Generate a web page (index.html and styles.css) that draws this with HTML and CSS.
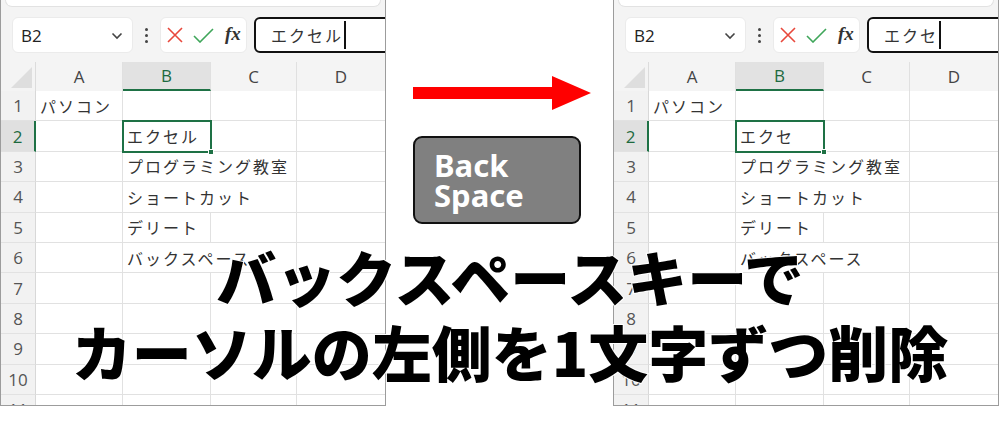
FILE: index.html
```html
<!DOCTYPE html>
<html lang="ja">
<head>
<meta charset="utf-8">
<title>BackSpace</title>
<link rel="stylesheet" href="styles.css">
</head>
<body>
<div class="page">
  <div class="sheet">
    <div class="ribbon"></div>
    <div class="fbar">
      <div class="namebox"><span class="ref">B2</span>
        <svg class="chev" width="12" height="8" viewBox="0 0 12 8"><path d="M1.5 1.5 L6 6 L10.5 1.5" fill="none" stroke="#444" stroke-width="1.6"/></svg>
      </div>
      <div class="dots"><i></i><i></i><i></i></div>
      <div class="fxbox">
        <svg width="16" height="16" viewBox="0 0 16 16"><path d="M1 1 L15 15 M15 1 L1 15" stroke="#e8483c" stroke-width="1.6"/></svg>
        <svg width="21" height="15" viewBox="0 0 21 15"><path d="M1 8 L7 14 L20 1" fill="none" stroke="#3fa65a" stroke-width="1.6"/></svg>
        <span class="fx">fx</span>
      </div>
      <div class="finput"><span class="ftext">エクセル</span><span class="caret"></span></div>
    </div>
    <div class="grid">
      <div class="corner"><span class="tri"></span></div>
      <div class="ch">A</div><div class="ch selc">B</div><div class="ch">C</div><div class="ch last">D</div>

      <div class="rh">1</div><div class="c">パソコン</div><div class="c"></div><div class="c"></div><div class="c last"></div>
      <div class="rh selr">2</div><div class="c"></div><div class="c sel">エクセル<span class="handle"></span></div><div class="c"></div><div class="c last"></div>
      <div class="rh">3</div><div class="c"></div><div class="c span">プログラミング教室</div><div class="c last"></div>
      <div class="rh">4</div><div class="c"></div><div class="c span">ショートカット</div><div class="c last"></div>
      <div class="rh">5</div><div class="c"></div><div class="c">デリート</div><div class="c"></div><div class="c last"></div>
      <div class="rh">6</div><div class="c"></div><div class="c span">バックスペース</div><div class="c last"></div>
      <div class="rh">7</div><div class="c"></div><div class="c"></div><div class="c"></div><div class="c last"></div>
      <div class="rh">8</div><div class="c"></div><div class="c"></div><div class="c"></div><div class="c last"></div>
      <div class="rh">9</div><div class="c"></div><div class="c"></div><div class="c"></div><div class="c last"></div>
      <div class="rh">10</div><div class="c"></div><div class="c"></div><div class="c"></div><div class="c last"></div>
      <div class="rh">11</div><div class="c"></div><div class="c"></div><div class="c"></div><div class="c last"></div>
    </div>
  </div>

  <div class="middle">
    <svg class="arrow" width="178" height="34" viewBox="0 0 178 34"><path d="M0 11 H139 V0 L178 17 L139 34 V23 H0 Z" fill="#ff0000"/></svg>
    <div class="key"><span>Back</span><span>Space</span></div>
  </div>

  <div class="sheet">
    <div class="ribbon"></div>
    <div class="fbar">
      <div class="namebox"><span class="ref">B2</span>
        <svg class="chev" width="12" height="8" viewBox="0 0 12 8"><path d="M1.5 1.5 L6 6 L10.5 1.5" fill="none" stroke="#444" stroke-width="1.6"/></svg>
      </div>
      <div class="dots"><i></i><i></i><i></i></div>
      <div class="fxbox">
        <svg width="16" height="16" viewBox="0 0 16 16"><path d="M1 1 L15 15 M15 1 L1 15" stroke="#e8483c" stroke-width="1.6"/></svg>
        <svg width="21" height="15" viewBox="0 0 21 15"><path d="M1 8 L7 14 L20 1" fill="none" stroke="#3fa65a" stroke-width="1.6"/></svg>
        <span class="fx">fx</span>
      </div>
      <div class="finput"><span class="ftext">エクセ</span><span class="caret"></span></div>
    </div>
    <div class="grid">
      <div class="corner"><span class="tri"></span></div>
      <div class="ch">A</div><div class="ch selc">B</div><div class="ch">C</div><div class="ch last">D</div>

      <div class="rh">1</div><div class="c">パソコン</div><div class="c"></div><div class="c"></div><div class="c last"></div>
      <div class="rh selr">2</div><div class="c"></div><div class="c sel">エクセ<span class="handle"></span></div><div class="c"></div><div class="c last"></div>
      <div class="rh">3</div><div class="c"></div><div class="c span">プログラミング教室</div><div class="c last"></div>
      <div class="rh">4</div><div class="c"></div><div class="c span">ショートカット</div><div class="c last"></div>
      <div class="rh">5</div><div class="c"></div><div class="c">デリート</div><div class="c"></div><div class="c last"></div>
      <div class="rh">6</div><div class="c"></div><div class="c span">バックスペース</div><div class="c last"></div>
      <div class="rh">7</div><div class="c"></div><div class="c"></div><div class="c"></div><div class="c last"></div>
      <div class="rh">8</div><div class="c"></div><div class="c"></div><div class="c"></div><div class="c last"></div>
      <div class="rh">9</div><div class="c"></div><div class="c"></div><div class="c"></div><div class="c last"></div>
      <div class="rh">10</div><div class="c"></div><div class="c"></div><div class="c"></div><div class="c last"></div>
      <div class="rh">11</div><div class="c"></div><div class="c"></div><div class="c"></div><div class="c last"></div>
    </div>
  </div>

  <div class="caption">
    <div>バックスペースキーで</div>
    <div>カーソルの左側を1文字ずつ削除</div>
  </div>
</div>
</body>
</html>
```

FILE: styles.css
```css
* { box-sizing: border-box; }
html, body { margin: 0; padding: 0; background: #fff; }
body { font-family: "Noto Sans", "Noto Sans CJK JP", sans-serif; }

.page {
  position: relative;
  width: 1000px;
  height: 438px;
  display: flex;
  align-items: flex-start;
  overflow: hidden;
}

.sheet {
  width: 386px;
  height: 406px;
  background: #f4f4f4;
  border: 1px solid #9c9c9c;
  border-top: none;
  overflow: hidden;
  flex: none;
}

.ribbon {
  height: 7px;
  margin: 0 4px;
  background: #fff;
  border: 1px solid #e2e2e2;
  border-top: none;
  border-radius: 0 0 7px 7px;
}

.fbar {
  display: flex;
  align-items: stretch;
  height: 36px;
  margin: 10px 0 0 11px;
}

.namebox {
  width: 121px;
  background: #fff;
  border-radius: 6px;
  border: 1px solid #ebebeb;
  display: flex;
  align-items: center;
  justify-content: space-between;
  padding: 0 9px 0 8px;
}
.ref { font-family: "Open Sans", sans-serif; font-size: 17px; color: #222; }
.chev { margin-top: 1px; }

.dots {
  width: 27px;
  display: flex;
  flex-direction: column;
  align-items: center;
  justify-content: center;
  gap: 3px;
}
.dots i { display: block; width: 3px; height: 3px; border-radius: 50%; background: #444; }

.fxbox {
  width: 87px;
  background: #fff;
  border-radius: 6px;
  border: 1px solid #ebebeb;
  display: flex;
  align-items: center;
  padding-left: 6px;
  gap: 10px;
}
.fx {
  font-family: "Liberation Serif", "DejaVu Serif", serif;
  font-style: italic;
  font-weight: bold;
  font-size: 19px;
  color: #333;
  margin-left: 1px;
  margin-top: -2px;
}

.finput {
  flex: 1;
  margin-left: 7px;
  margin-right: -12px;
  background: #fff;
  border: 2px solid #111;
  border-radius: 6px;
  display: flex;
  align-items: center;
  padding-left: 15px;
}
.ftext {
  font-family: "Noto Sans CJK JP", sans-serif;
  font-size: 16px;
  letter-spacing: 2px;
  color: #333;
}
.caret { width: 1.5px; height: 28px; background: #111; margin-left: 1px; }

.grid {
  margin-top: 9px;
  display: grid;
  grid-template-columns: 35px 87px 88px 86px 1fr;
  grid-template-rows: 29px;
  grid-auto-rows: 30.4px;
  background: #fff;
}

.corner {
  background: #f4f4f4;
  border-right: 1px solid #dcdcdc;
  position: relative;
}
.tri {
  position: absolute;
  right: 3px;
  bottom: 3px;
  width: 0; height: 0;
  border-left: 21px solid transparent;
  border-bottom: 21px solid #dedede;
}

.ch {
  background: #f4f4f4;
  border-right: 1px solid #e0e0e0;
  display: flex;
  align-items: center;
  justify-content: center;
  font-family: "Open Sans", sans-serif;
  font-size: 17px;
  color: #444;
}
.ch.last { border-right: none; }
.ch.selc {
  background: #e2e2e2;
  color: #1d6a3f;
  border-bottom: 2px solid #1e7145;
}

.rh {
  background: #f2f2f2;
  border-right: 1px solid #d8d8d8;
  border-bottom: 1px solid #e2e2e2;
  display: flex;
  align-items: center;
  justify-content: center;
  font-family: "Open Sans", sans-serif;
  font-size: 17px;
  color: #555;
}
.rh.selr {
  background: #e0e0e0;
  color: #1d6a3f;
  border-right: 2px solid #1e7145;
}

.c {
  border-right: 1px solid #e1e1e1;
  border-bottom: 1px solid #e1e1e1;
  font-family: "Noto Sans CJK JP", sans-serif;
  font-size: 16px;
  letter-spacing: 2px;
  color: #333;
  white-space: nowrap;
  display: flex;
  align-items: center;
  padding-left: 4px;
}
.c.last { border-right: none; }
.c.span { grid-column: span 2; }

.c.sel {
  position: relative;
  outline: 2px solid #1e7145;
  outline-offset: -1px;
  z-index: 1;
}
.handle {
  position: absolute;
  right: -4px;
  bottom: -4px;
  width: 6px;
  height: 6px;
  background: #1e7145;
  border: 1px solid #fff;
}

.middle {
  width: 227px;
  flex: none;
  padding: 76px 0 0 27px;
  display: flex;
  flex-direction: column;
  align-items: flex-start;
}
.arrow { display: block; }
.key {
  margin-top: 26px;
  width: 168px;
  height: 88px;
  background: #808080;
  border: 2px solid #111;
  border-radius: 9px;
  display: flex;
  flex-direction: column;
  justify-content: center;
  padding-left: 19px;
  font-family: "Noto Sans", sans-serif;
  font-weight: bold;
  font-size: 31px;
  line-height: 30px;
  color: #fff;
}

.caption {
  position: absolute;
  left: 10px;
  top: 238px;
  width: 1000px;
  text-align: center;
  font-family: "Noto Sans CJK JP", sans-serif;
  font-weight: 900;
  font-size: 60px;
  line-height: 75px;
  color: #000;
  -webkit-text-stroke: 2px #fff;
  paint-order: stroke fill;
  z-index: 5;
}
```
